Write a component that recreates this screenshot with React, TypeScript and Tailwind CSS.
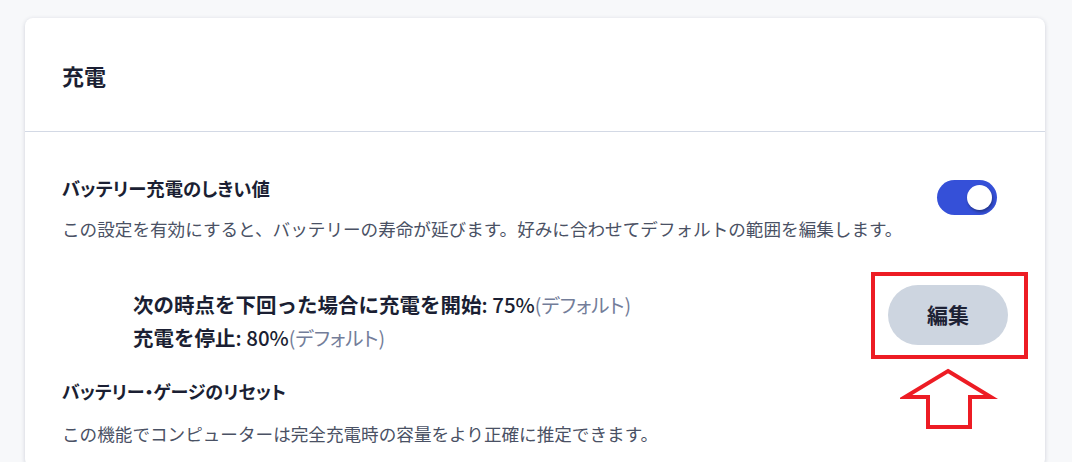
import { useState } from 'react';

// 充電設定カード (注釈の赤枠と矢印つき)
const jp = "font-['Noto_Sans_CJK_JP','Noto_Sans',sans-serif] [font-feature-settings:'palt']";

function Toggle({ on, onChange }: { on: boolean; onChange: () => void }) {
  return (
    <button
      onClick={onChange}
      className={`relative w-[60px] h-[35px] rounded-full shrink-0 transition-colors
                  ${on ? 'bg-[#3550d8]' : 'bg-[#c5ccd8]'}`}>
      <span
        className={`absolute top-[5px] w-[25px] h-[25px] rounded-full bg-white
                    shadow-[1px_2px_3px_rgba(0,0,0,0.35)] transition-all
                    ${on ? 'left-[30px]' : 'left-[5px]'}`} />
    </button>
  );
}

export default function App() {
  const [threshold, setThreshold] = useState(true);

  return (
    <div className={`min-h-screen bg-[#f7f8fa] pl-[25px] pr-[27px] pt-[18px] ${jp}`}>
      <div className="bg-white rounded-lg shadow-[0_1px_4px_rgba(30,40,70,0.18)] overflow-visible">

        {/* ヘッダー */}
        <div className="h-[114px] flex items-center px-[37px] border-b border-[#d3d9e5]">
          <h2 className="text-[22px] font-semibold text-[#1b1f33] leading-none">充電</h2>
        </div>

        <div className="px-[37px] pt-[43px] pb-[20px]">

          {/* バッテリー充電のしきい値 */}
          <div className="flex items-start justify-between">
            <div>
              <p className="text-[18.4px] leading-[26px] font-semibold text-[#1b1f33]">
                バッテリー充電のしきい値
              </p>
              <p className="mt-[15px] text-[17.6px] leading-[26px] text-[#4a5164] [font-feature-settings:normal]">
                この設定を有効にすると、バッテリーの寿命が延びます。好みに合わせてデフォルトの範囲を編集します。
              </p>
            </div>
            <div className="mt-[5px] mr-[11px]">
              <Toggle on={threshold} onChange={() => setThreshold(!threshold)} />
            </div>
          </div>

          {/* しきい値の範囲 */}
          <div className="flex items-center justify-between mt-[46px]">
            <div className="pl-[71px] text-[20.5px] leading-[32px] text-[#1b1f33]">
              <p>
                <b className="font-bold [font-feature-settings:normal]">次の時点を下回った場合に充電を開始</b>
                <span className="font-medium">: 75%</span>
                <span className="text-[#737d99] text-[19.5px]">(デフォルト)</span>
              </p>
              <p>
                <b className="font-bold [font-feature-settings:normal]">充電を停止</b>
                <span className="font-medium">: 80%</span>
                <span className="text-[#737d99] text-[19.5px]">(デフォルト)</span>
              </p>
            </div>

            <div className="relative -mt-[12px]">
              <button className="w-[120px] h-[60px] rounded-full bg-[#cdd5e0] text-[21px] font-semibold text-[#1e2235]">
                編集
              </button>
              {/* 注釈: 赤枠 */}
              <div className="absolute -left-[17px] -right-[20px] -top-[13px] -bottom-[14px] border-4 border-[#ed1c24] pointer-events-none" />
              {/* 注釈: 上向き矢印 */}
              <svg className="absolute left-[12px] top-[81px]" width="98" height="65" viewBox="0 0 98 65" fill="none">
                <path d="M48 5 L91 31 L70 31 L70 61 L28 61 L28 31 L5 31 Z"
                      stroke="#ed1c24" strokeWidth="4" strokeLinejoin="miter" />
              </svg>
            </div>
          </div>

          {/* バッテリー・ゲージのリセット */}
          <p className="mt-[24px] text-[18px] leading-[26px] font-semibold text-[#1b1f33]">
            バッテリー・ゲージのリセット
          </p>
          <p className="mt-[17px] text-[17.6px] leading-[26px] text-[#4a5164] [font-feature-settings:normal]">
            この機能でコンピューターは完全充電時の容量をより正確に推定できます。
          </p>
        </div>
      </div>
    </div>
  );
}
